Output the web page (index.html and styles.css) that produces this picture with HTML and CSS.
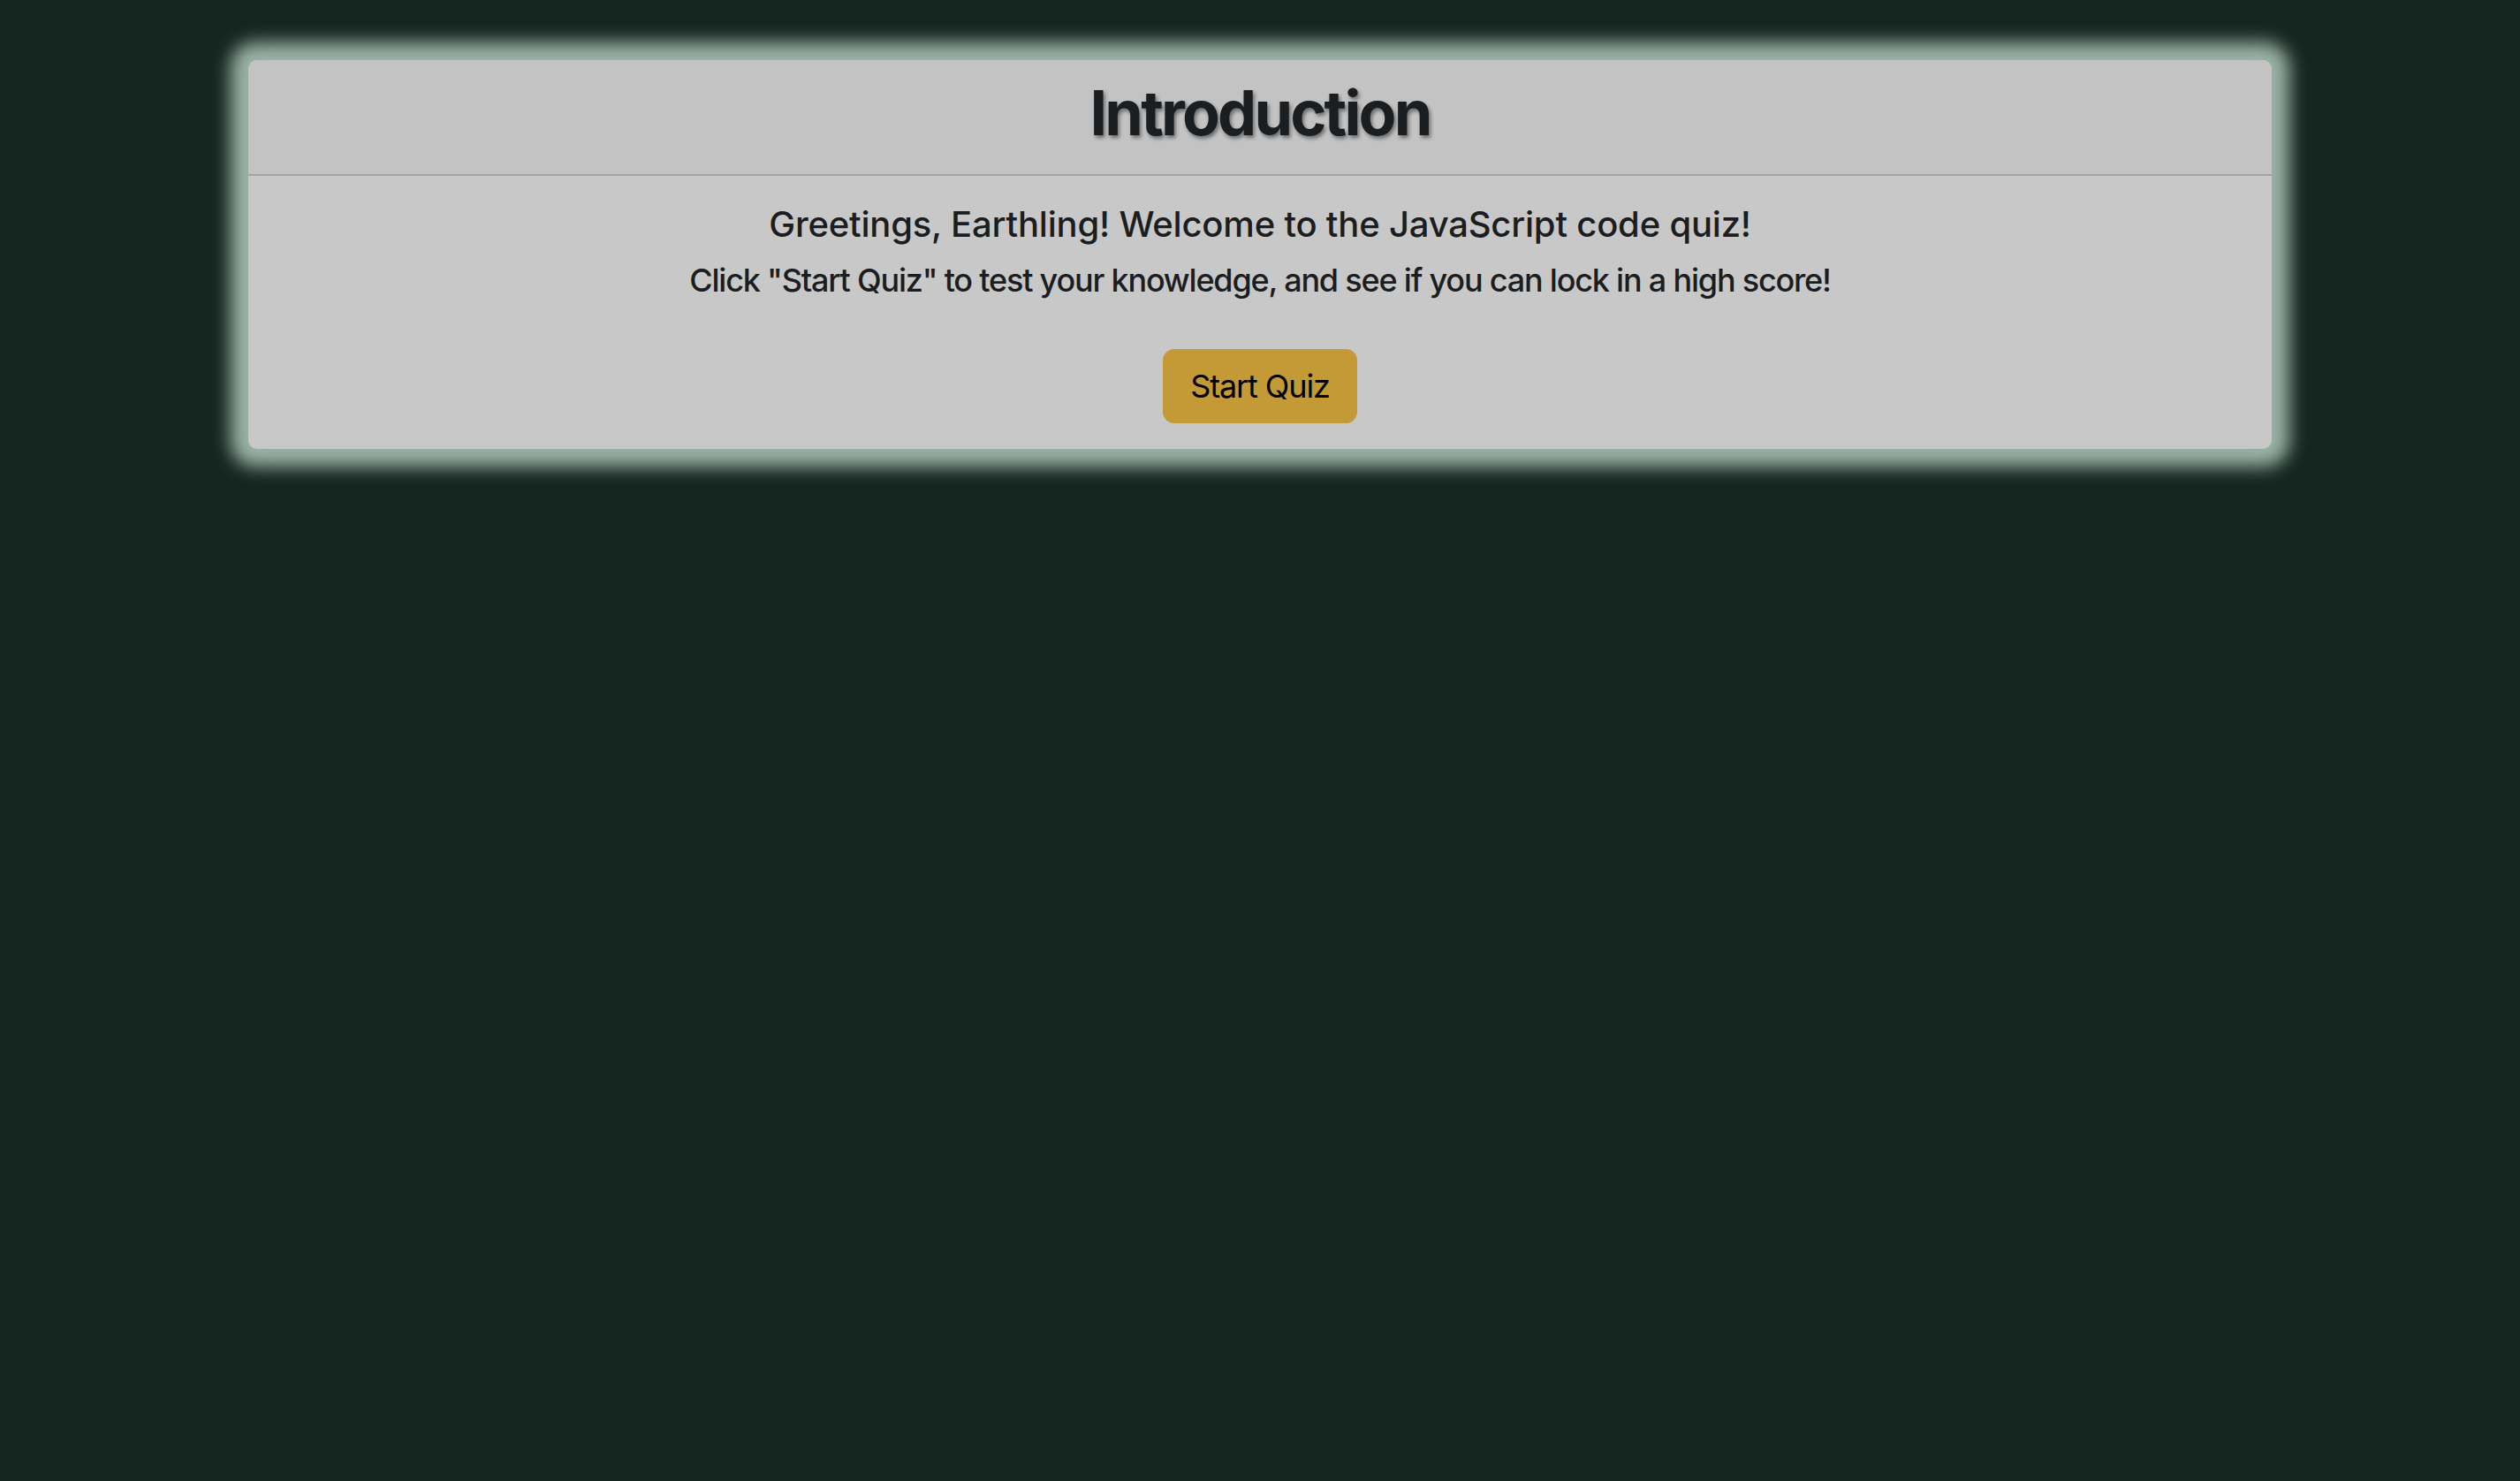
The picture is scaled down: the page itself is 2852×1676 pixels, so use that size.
FILE: index.html
```html
<!DOCTYPE html>
<html lang="en">
<head>
<meta charset="utf-8">
<title>Code Quiz</title>
<link rel="stylesheet" href="styles.css">
</head>
<body>
<main class="page">
  <section class="card">
    <header class="card-header">
      <h1 class="title">Introduction</h1>
    </header>
    <div class="card-body">
      <h3 class="greeting">Greetings, Earthling! Welcome to the JavaScript code quiz!</h3>
      <h4 class="subtitle">Click "Start Quiz" to test your knowledge, and see if you can lock in a high score!</h4>
      <button class="start-btn" type="button">Start Quiz</button>
    </div>
  </section>
</main>
</body>
</html>
```

FILE: styles.css
```css
html, body {
  margin: 0;
  padding: 0;
}
body {
  background: #15251f;
  min-height: 100vh;
  font-family: Inter, "Noto Sans", "Liberation Sans", sans-serif;
  color: #1b1d20;
}
.page {
  padding-top: 68px;
  display: flex;
  justify-content: center;
}
.card {
  width: 2290px;
  border-radius: 10px;
  background: #c8c8c8;
  box-shadow: 0 0 20px 20px #9bb3a7;
  overflow: hidden;
}
.card-header {
  background: #c3c3c3;
  border-bottom: 2px solid #a4a4a4;
  padding-top: 18px;
  height: 111px;
  display: flex;
  justify-content: center;
}
.title {
  margin: 0;
  font-size: 70px;
  line-height: 84px;
  font-weight: 700;
  color: #1b1e21;
  text-shadow: 2px 3px 4px rgba(0, 0, 0, 0.45);
  letter-spacing: -2.8px;
}
.card-body {
  padding: 31px 0 29px;
  display: flex;
  flex-direction: column;
  align-items: center;
}
.greeting {
  margin: 0;
  font-size: 40px;
  line-height: 48px;
  font-weight: 500;
  letter-spacing: -0.2px;
}
.subtitle {
  margin: 17px 0 0;
  font-size: 36px;
  line-height: 44px;
  font-weight: 500;
  letter-spacing: -1.2px;
}
.start-btn {
  margin-top: 56px;
  font-family: inherit;
  font-size: 36px;
  line-height: 44px;
  padding: 20px 31px;
  background: #c49a36;
  color: #000;
  border: none;
  border-radius: 13px;
  font-weight: 400;
  letter-spacing: -1.1px;
}
```
